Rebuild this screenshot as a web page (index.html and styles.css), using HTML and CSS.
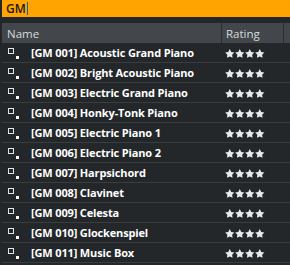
FILE: index.html
```html
<!DOCTYPE html>
<html lang="en">
<head>
    <meta charset="UTF-8">
    <title>Presets</title>
    <link rel="stylesheet" href="styles.css">
</head>
<body>

<div class="search">GM<span class="caret"></span></div>

<div class="list">
    <div class="row head">
        <div class="col-name">Name</div>
        <div class="col-rating">Rating</div>
        <div class="col-rest"></div>
    </div>
    <div id="rows"></div>
</div>

<script>
    const presets = [
        'Acoustic Grand Piano', 'Bright Acoustic Piano', 'Electric Grand Piano',
        'Honky-Tonk Piano', 'Electric Piano 1', 'Electric Piano 2', 'Harpsichord',
        'Clavinet', 'Celesta', 'Glockenspiel', 'Music Box'
    ];

    const icon = '<svg class="icon" width="14" height="14" viewBox="0 0 14 14">' +
        '<rect x="1.5" y="1.5" width="5" height="5" fill="none" stroke="#e6e6e6" stroke-width="1"/>' +
        '<rect x="9" y="9" width="3" height="3" fill="#ffffff"/></svg>';

    const starPath = 'M4.75 0.1 L6.22 2.88 L9.32 3.42 L7.13 5.67 L7.57 8.78 L4.75 7.4 L1.93 8.78 L2.37 5.67 L0.18 3.42 L3.28 2.88Z';
    let stars = '<svg class="stars" width="40" height="9" viewBox="0 0 40 9">';
    for (let s = 0; s < 4; s++) {
        stars += '<path transform="translate(' + (s * 10) + ' 0)" d="' + starPath + '" fill="#e9e9e9"/>';
    }
    stars += '</svg>';

    let html = '';
    presets.forEach(function (name, i) {
        const num = String(i + 1).padStart(3, '0');
        html += '<div class="row">' +
            '<div class="col-name">' + icon + '<span class="label">[GM ' + num + '] ' + name + '</span></div>' +
            '<div class="col-rating">' + stars + '</div>' +
            '<div class="col-rest"></div>' +
            '</div>';
    });
    document.getElementById('rows').innerHTML = html;
</script>

</body>
</html>
```

FILE: styles.css
```css
body {
    margin: 0;
    background: #24272a;
    font-family: 'Open Sans', sans-serif;
    font-size: 12px;
    overflow: hidden;
}

.search {
    margin-left: 2px;
    height: 17px;
    background: #ffa400;
    color: #1a1a1a;
    font-weight: 600;
    padding-left: 4px;
    line-height: 17px;
    display: flex;
    align-items: center;
}

.caret {
    display: inline-block;
    width: 1px;
    height: 13px;
    background: #1a5fb4;
    margin-left: 1px;
}

.list {
    margin-top: 6px;
    margin-left: 2px;
}

.row {
    display: flex;
    height: 20px;
    border-bottom: 1px solid #3a3d40;
    box-sizing: border-box;
}

.head {
    background: #43474b;
    color: #d6dadf;
    border-bottom: none;
    font-size: 11.5px;
}

.col-name {
    width: 219px;
    display: flex;
    align-items: center;
    padding-left: 5px;
    box-sizing: border-box;
}

.col-rating {
    width: 62px;
    display: flex;
    align-items: center;
    padding-left: 4px;
    box-sizing: border-box;
}

.head .col-rating,
.head .col-rest {
    border-left: 1px solid #2c2f32;
}

.col-rest {
    flex: 1;
}

.icon {
    margin-right: 10px;
    margin-top: 3px;
}

.label {
    color: #ffffff;
    font-weight: 700;
    font-size: 11px;
    letter-spacing: -0.15px;
}

.stars {
    margin-top: 2px;
}
```
